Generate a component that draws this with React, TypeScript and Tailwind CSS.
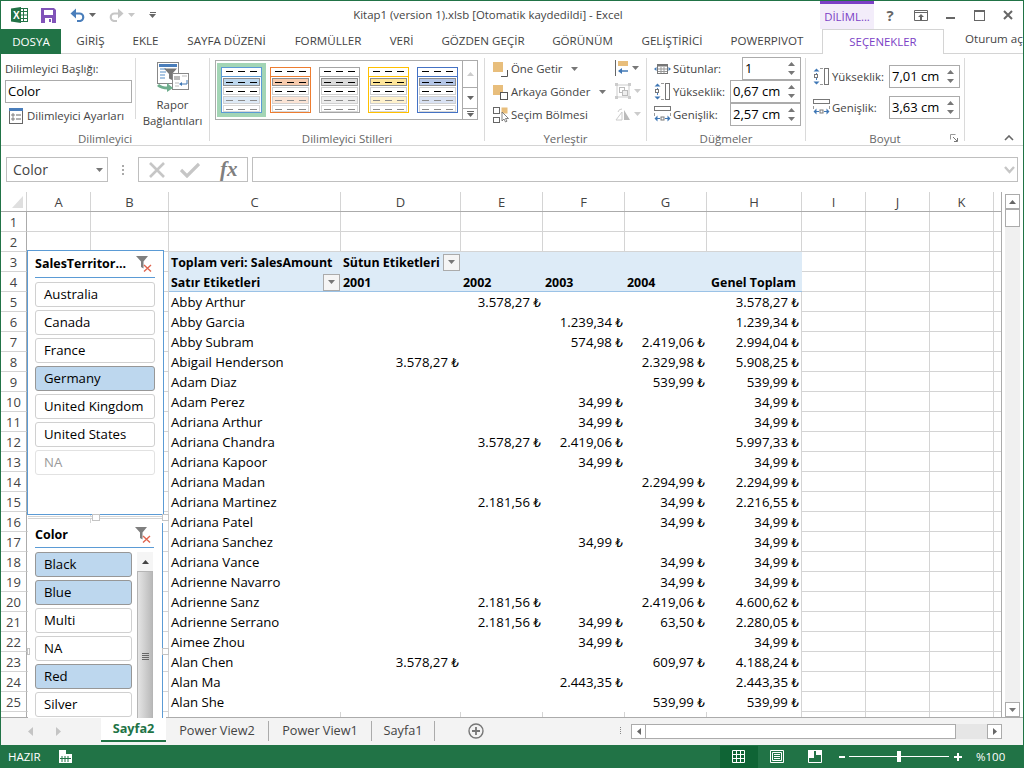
import React from "react"

const columnWidths = ["w-[64px]", "w-[78px]", "w-[172px]", "w-[120px]", "w-[82px]", "w-[82px]", "w-[82px]", "w-[95px]", "w-[64px]", "w-[64px]", "w-[64px]", "w-[8px]"]
const columnNames = ["A", "B", "C", "D", "E", "F", "G", "H", "I", "J", "K", ""]

// name, 2001, 2002, 2003, 2004, total
const pivotRows: string[][] = [
  ["Abby Arthur", "", "3.578,27", "", "", "3.578,27"],
  ["Abby Garcia", "", "", "1.239,34", "", "1.239,34"],
  ["Abby Subram", "", "", "574,98", "2.419,06", "2.994,04"],
  ["Abigail Henderson", "3.578,27", "", "", "2.329,98", "5.908,25"],
  ["Adam Diaz", "", "", "", "539,99", "539,99"],
  ["Adam Perez", "", "", "34,99", "", "34,99"],
  ["Adriana Arthur", "", "", "34,99", "", "34,99"],
  ["Adriana Chandra", "", "3.578,27", "2.419,06", "", "5.997,33"],
  ["Adriana Kapoor", "", "", "34,99", "", "34,99"],
  ["Adriana Madan", "", "", "", "2.294,99", "2.294,99"],
  ["Adriana Martinez", "", "2.181,56", "", "34,99", "2.216,55"],
  ["Adriana Patel", "", "", "", "34,99", "34,99"],
  ["Adriana Sanchez", "", "", "34,99", "", "34,99"],
  ["Adriana Vance", "", "", "", "34,99", "34,99"],
  ["Adrienne Navarro", "", "", "", "34,99", "34,99"],
  ["Adrienne Sanz", "", "2.181,56", "", "2.419,06", "4.600,62"],
  ["Adrienne Serrano", "", "2.181,56", "34,99", "63,50", "2.280,05"],
  ["Aimee Zhou", "", "", "34,99", "", "34,99"],
  ["Alan Chen", "3.578,27", "", "", "609,97", "4.188,24"],
  ["Alan Ma", "", "", "2.443,35", "", "2.443,35"],
  ["Alan She", "", "", "", "539,99", "539,99"],
]

const tabs = [
  { label: "GİRİŞ", w: "w-[59px]" },
  { label: "EKLE", w: "w-[51px]" },
  { label: "SAYFA DÜZENİ", w: "w-[111px]" },
  { label: "FORMÜLLER", w: "w-[92px]" },
  { label: "VERİ", w: "w-[55px]" },
  { label: "GÖZDEN GEÇİR", w: "w-[108px]" },
  { label: "GÖRÜNÜM", w: "w-[91px]" },
  { label: "GELİŞTİRİCİ", w: "w-[88px]" },
  { label: "POWERPIVOT", w: "w-[102px]" },
]

const swatches = [
  { border: "#5B9BD5", a: "#BDD7EE", b: "#DEEAF6", selected: true },
  { border: "#ED7D31", a: "#F8CBAD", b: "#FBE4D5", selected: false },
  { border: "#A5A5A5", a: "#DBDBDB", b: "#EDEDED", selected: false },
  { border: "#FFC000", a: "#FFE699", b: "#FFF2CC", selected: false },
  { border: "#4472C4", a: "#B4C6E7", b: "#D9E2F3", selected: false },
]

function Caret({ className = "" }: { className?: string }) {
  return (
    <svg width="7" height="4" viewBox="0 0 7 4" className={className}>
      <path d="M0 0h7L3.5 4z" fill="currentColor" />
    </svg>
  )
}

function ExcelLogo() {
  return (
    <svg width="17" height="16" viewBox="0 0 17 16">
      <rect x="6.5" y="1.5" width="10" height="13" fill="#fff" stroke="#217346" />
      <path d="M10 4.5h6M10 8h6M10 11.5h6M12.5 2v12" stroke="#217346" />
      <path d="M0 1.5L10 0v16L0 14.5z" fill="#217346" />
      <text x="2" y="12" fontSize="10" fontWeight="700" fill="#fff" fontFamily="Liberation Sans">X</text>
    </svg>
  )
}

function SaveIcon() {
  return (
    <svg width="15" height="15" viewBox="0 0 15 15">
      <path d="M0 0h13l2 2v13H0z" fill="#8053B8" />
      <rect x="3" y="2" width="9" height="5" fill="#fff" />
      <rect x="4" y="10" width="7" height="5" fill="#fff" />
      <rect x="8" y="11" width="2" height="3" fill="#8053B8" />
    </svg>
  )
}

function UndoArrow({ color, flip }: { color: string; flip?: boolean }) {
  return (
    <svg width="15" height="14" viewBox="0 0 15 14" className={flip ? "-scale-x-100" : ""}>
      <path d="M2 5.5h7.5a3.6 3.6 0 0 1 0 7.5H7" fill="none" stroke={color} strokeWidth="2.2" />
      <path d="M6 0.5L0.5 5.5 6 10.5z" fill={color} />
    </svg>
  )
}

function FilterClear() {
  return (
    <svg width="17" height="16" viewBox="0 0 17 16">
      <path d="M0 0h12L7.5 5.5v7L5 11V5.5z" fill="#7f7f7f" />
      <path d="M8 9l7 6.5M15 9l-7 6.5" stroke="#E0654F" strokeWidth="1.4" />
    </svg>
  )
}

function DropButton({ className = "" }: { className?: string }) {
  return (
    <span className={`flex h-[17px] w-[17px] items-center justify-center border border-[#ababab] bg-[#f5f5f5] text-[#777] ${className}`}>
      <Caret />
    </span>
  )
}

function StyleSwatch({ border, a, b, selected }: { border: string; a: string; b: string; selected: boolean }) {
  const dash = (y: number, color: string) => (
    <path d={`M5 ${y}h7M17 ${y}h7M29 ${y}h7`} stroke={color} />
  )
  return (
    <div className={`flex h-[54px] w-[49px] items-center justify-center ${selected ? "bg-[#A3D5B5]" : ""}`}>
      <svg width="41" height="46" viewBox="0 0 41 46">
        <rect x="0.5" y="0.5" width="40" height="45" fill="#fff" stroke={border} />
        <path d="M0 9.5h41" stroke={border} />
        {dash(4.5, "#000")}
        <rect x="2.5" y="11.5" width="36" height="7" fill={a} stroke="#8f8f8f" />
        {dash(15.5, "#000")}
        <rect x="2.5" y="20.5" width="36" height="7" fill="#fff" stroke="#d0d0d0" />
        {dash(24.5, "#000")}
        <rect x="2.5" y="29.5" width="36" height="7" fill={b} stroke="#d0d0d0" />
        {dash(33.5, "#8a8a8a")}
        <rect x="2.5" y="38.5" width="36" height="6" fill="#fff" stroke="#d8d8d8" />
        {dash(42.5, "#8a8a8a")}
      </svg>
    </div>
  )
}

function RibbonGroup({ label, width, children, launcher }: { label: string; width: string; children: React.ReactNode; launcher?: boolean }) {
  return (
    <div className={`relative my-[4px] flex shrink-0 flex-col border-r border-[#dadada] ${width}`}>
      <div className="flex min-h-0 flex-1">{children}</div>
      <div className="h-[9px] text-center text-[11.5px] leading-[14px] text-[#666]">{label}</div>
      {launcher && (
        <svg width="8" height="8" viewBox="0 0 8 8" className="absolute bottom-[-1px] right-[6px]">
          <path d="M0.5 0.5h5M0.5 0.5v5" stroke="#999" fill="none" />
          <path d="M3 3l4 4M7.5 4v3.5H4" stroke="#777" fill="none" />
        </svg>
      )}
    </div>
  )
}

function SpinInput({ value, width }: { value: string; width: string }) {
  return (
    <div className={`flex h-[23px] items-center justify-between border border-[#ababab] bg-white pl-[2px] pr-[2px] text-[13px] text-black ${width}`}>
      <span>{value}</span>
      <span className="flex w-[13px] flex-col items-center gap-[5px] text-[#777]">
        <Caret className="rotate-180" />
        <Caret />
      </span>
    </div>
  )
}

function HeightIcon() {
  return (
    <svg width="17" height="17" viewBox="0 0 17 17">
      <path d="M3.5 5v7" stroke="#4a7ebb" />
      <path d="M0.5 3.5l3-3 3 3zM0.5 13.5l3 3 3-3z" fill="#3f77b5" />
      <rect x="1.5" y="6.5" width="3" height="3" fill="#fff" stroke="#777" />
      <rect x="11.5" y="0.5" width="4" height="16" fill="#fff" stroke="#777" />
      <path d="M7 0.5h3M7 16.5h3" stroke="#999" />
    </svg>
  )
}

function WidthIcon() {
  return (
    <svg width="17" height="17" viewBox="0 0 17 17">
      <rect x="0.5" y="0.5" width="16" height="4" fill="#fff" stroke="#777" />
      <path d="M0.5 7v3M16.5 7v3" stroke="#999" />
      <rect x="7" y="11" width="3" height="3" fill="#fff" stroke="#777" />
      <path d="M3.5 9.5l-3 3 3 3zM13.5 9.5l3 3-3 3z" fill="#3f77b5" />
      <path d="M3 12.5h3M11 12.5h3" stroke="#3f77b5" />
    </svg>
  )
}

function ColumnsIcon() {
  return (
    <svg width="17" height="12" viewBox="0 0 17 12">
      <path d="M0 6l2.5-2v4zM17 6l-2.5-2v4z" fill="#3f77b5" />
      <rect x="3.5" y="1.5" width="10" height="9" fill="#fff" stroke="#777" />
      <path d="M3.5 1.5h10v2h-10z" fill="#777" />
      <path d="M4 6h9M4 8.5h9M7 4v6M10 4v6" stroke="#999" />
    </svg>
  )
}

function ArrangeIcon({ kind }: { kind: "front" | "back" | "pane" }) {
  if (kind === "pane") {
    return (
      <svg width="16" height="16" viewBox="0 0 16 16">
        <rect x="0.5" y="0.5" width="6" height="6" fill="#fff" stroke="#666" />
        <rect x="0.5" y="10.5" width="6" height="5" fill="#fff" stroke="#666" />
        <rect x="8.5" y="0.5" width="6" height="6" fill="#E8BE7C" />
        <path d="M9 5l0 9 2-2 1.5 3 1.5-.8-1.5-2.7h3z" fill="#fff" stroke="#666" strokeWidth="0.8" />
      </svg>
    )
  }
  return (
    <svg width="15" height="15" viewBox="0 0 15 15">
      {kind === "front" && <path d="M8 14.5h6.5V8" fill="none" stroke="#555" />}
      <rect x="0" y="0" width="10" height="10" fill="#E8BE7C" />
      {kind === "back" && <rect x="7.5" y="7.5" width="7" height="7" fill="#fff" stroke="#555" />}
    </svg>
  )
}

function AlignIcon() {
  return (
    <svg width="14" height="16" viewBox="0 0 14 16">
      <path d="M0.5 0v16" stroke="#666" />
      <rect x="3" y="1" width="10" height="5" fill="#E8BE7C" />
      <path d="M4 11h9" stroke="#3f77b5" strokeWidth="1.5" />
      <path d="M7 8l-4 3 4 3z" fill="#3f77b5" />
    </svg>
  )
}

function GroupIcon() {
  return (
    <svg width="16" height="16" viewBox="0 0 16 16">
      <path d="M2 2h12v12H2z" fill="none" stroke="#ccc" />
      <path d="M0 0h3v3H0zM13 0h3v3h-3zM0 13h3v3H0zM13 13h3v3h-3z" fill="#ccc" />
      <rect x="4.5" y="4.5" width="5" height="5" fill="#fff" stroke="#bbb" />
      <rect x="7.5" y="7.5" width="5" height="5" fill="#eee" stroke="#bbb" />
    </svg>
  )
}

function RotateIcon() {
  return (
    <svg width="16" height="14" viewBox="0 0 16 14">
      <path d="M1 13L7 5v8z" fill="#fff" stroke="#ccc" />
      <path d="M9 3l6 10H9z" fill="#bbb" />
      <path d="M3 5a4 4 0 0 1 4-3" fill="none" stroke="#ccc" />
    </svg>
  )
}

function ReportIcon() {
  return (
    <svg width="32" height="30" viewBox="0 0 32 30">
      <rect x="0.5" y="0.5" width="21" height="21" fill="#fff" stroke="#888" />
      <rect x="2" y="2" width="18" height="3" fill="#4a7ebb" />
      <path d="M3 7h6M3 10h6M3 13h5M3 16h5" stroke="#8fb4d9" strokeWidth="1.4" />
      <path d="M7 6.5h13l-5 5.5v6l-3-1.5V12z" fill="#777" />
      <rect x="15.5" y="11.5" width="16" height="16" fill="#fff" stroke="#888" />
      <path d="M17 14h6v4h-6z" fill="#bbb" />
      <path d="M25 14h5" stroke="#bbb" />
      <path d="M18 21h4M18 24h4" stroke="#bbb" />
      <path d="M30 18v4h-5" stroke="#3f77b5" fill="none" />
      <path d="M25 20l-3 2 3 2z" fill="#3f77b5" />
      <path d="M1 23c3 3 7 3 10 3" fill="none" stroke="#6FAE8D" strokeWidth="3" />
      <path d="M10 21l6 5-6 4z" fill="#6FAE8D" />
    </svg>
  )
}

function SettingsIcon() {
  return (
    <svg width="14" height="16" viewBox="0 0 14 16">
      <rect x="0.5" y="0.5" width="13" height="15" fill="#fff" stroke="#666" />
      <rect x="0" y="0" width="14" height="3" fill="#4a7ebb" />
      <path d="M3 6h2v2H3zM3 10h2v2H3z" fill="none" stroke="#666" strokeWidth="0.8" />
      <path d="M7 7h5M7 11h5" stroke="#666" />
    </svg>
  )
}

function Ribbon() {
  return (
    <div className="flex h-[92px] shrink-0 border-b border-[#d4d4d4] bg-white text-[11.4px] text-[#444]">
      <RibbonGroup label="Dilimleyici" width="w-[209px]">
        <div className="mb-[13px] flex w-[135px] shrink-0 flex-col border-r border-[#dadada] pl-[4px]">
          <div className="mt-[2px] h-[20px] shrink-0 leading-[18px]">Dilimleyici Başlığı:</div>
          <div className="flex h-[23px] w-[127px] shrink-0 items-center border border-[#ababab] px-[2px] text-[13px] text-black">Color</div>
          <div className="mt-[4px] flex shrink-0 items-center gap-[4px] pl-[4px]">
            <SettingsIcon />
            <span>Dilimleyici Ayarları</span>
          </div>
        </div>
        <div className="flex flex-1 flex-col items-center pt-[4px] leading-[16px]">
          <ReportIcon />
          <div className="mt-[5px]">Rapor</div>
          <div>Bağlantıları</div>
        </div>
      </RibbonGroup>

      <RibbonGroup label="Dilimleyici Stilleri" width="w-[275px]">
        <div className="ml-[5px] mt-[2px] flex h-[60px] w-[263px] border border-[#ababab] pl-[1px] pt-[2px]">
          <div className="flex flex-1">
            {swatches.map((s) => (
              <StyleSwatch key={s.border} {...s} />
            ))}
          </div>
          <div className="-mt-[2px] flex w-[15px] flex-col border-l border-[#ababab] text-[#999]">
            <div className="flex h-[27px] items-center justify-center border-b border-[#ababab] text-[#ccc]"><Caret className="rotate-180" /></div>
            <div className="flex h-[21px] items-center justify-center border-b border-[#ababab] text-[#666]"><Caret /></div>
            <div className="flex flex-1 flex-col items-center justify-center gap-[1px] text-[#666]">
              <span className="h-px w-[7px] bg-[#666]" />
              <Caret />
            </div>
          </div>
        </div>
      </RibbonGroup>

      <RibbonGroup label="Yerleştir" width="w-[162px]">
        <div className="flex w-[130px] shrink-0 flex-col gap-[7px] whitespace-nowrap pl-[8px] pt-[3px]">
          <div className="flex h-[16px] items-center gap-[3px]"><ArrangeIcon kind="front" /><span>Öne Getir</span><Caret className="ml-[6px] text-[#777]" /></div>
          <div className="flex h-[16px] items-center gap-[3px]"><ArrangeIcon kind="back" /><span>Arkaya Gönder</span><Caret className="ml-[6px] text-[#777]" /></div>
          <div className="flex h-[16px] items-center gap-[2px]"><ArrangeIcon kind="pane" /><span>Seçim Bölmesi</span></div>
        </div>
        <div className="flex flex-col gap-[7px] pt-[2px]">
          <div className="flex h-[16px] items-center gap-[3px] text-[#777]"><AlignIcon /><Caret /></div>
          <div className="flex h-[16px] items-center gap-[3px] text-[#ccc]"><GroupIcon /><Caret /></div>
          <div className="flex h-[16px] items-center gap-[3px] text-[#ccc]"><RotateIcon /><Caret /></div>
        </div>
      </RibbonGroup>

      <RibbonGroup label="Düğmeler" width="w-[159px]">
        <div className="-mt-[1px] flex flex-1 flex-col pl-[7px]">
          <div className="flex h-[23px] items-center"><span className="flex w-[19px]"><ColumnsIcon /></span><span className="w-[70px]">Sütunlar:</span><SpinInput value="1" width="ml-[-1px] w-[59px]" /></div>
          <div className="flex h-[23px] items-center"><span className="flex w-[19px]"><HeightIcon /></span><span className="w-[57px]">Yükseklik:</span><SpinInput value="0,67 cm" width="w-[71px]" /></div>
          <div className="flex h-[23px] items-center"><span className="flex w-[19px]"><WidthIcon /></span><span className="w-[57px]">Genişlik:</span><SpinInput value="2,57 cm" width="w-[71px]" /></div>
        </div>
      </RibbonGroup>

      <RibbonGroup label="Boyut" width="w-[159px]" launcher>
        <div className="flex flex-1 flex-col gap-[8px] pl-[7px] pt-[7px]">
          <div className="flex h-[23px] items-center"><span className="flex w-[19px]"><HeightIcon /></span><span className="w-[57px]">Yükseklik:</span><SpinInput value="7,01 cm" width="w-[71px]" /></div>
          <div className="flex h-[23px] items-center"><span className="flex w-[19px]"><WidthIcon /></span><span className="w-[57px]">Genişlik:</span><SpinInput value="3,63 cm" width="w-[71px]" /></div>
        </div>
      </RibbonGroup>

      <div className="flex flex-1 items-end justify-end pb-[4px] pr-[9px]">
        <svg width="10" height="6" viewBox="0 0 10 6"><path d="M1 5l4-4 4 4" fill="none" stroke="#666" strokeWidth="1.6" /></svg>
      </div>
    </div>
  )
}

function FormulaBar() {
  return (
    <div className="flex h-[46px] shrink-0 items-center gap-[4px] bg-white pl-[5px] pr-[5px] pt-[1px]">
      <div className="flex h-[25px] w-[102px] items-center justify-between border border-[#bfbfbf] pl-[6px] pr-[4px] text-[14px] text-[#444]">
        Color
        <Caret className="text-[#777]" />
      </div>
      <div className="flex w-[22px] flex-col items-center gap-[2px]">
        <span className="h-[2px] w-[2px] bg-[#aaa]" />
        <span className="h-[2px] w-[2px] bg-[#aaa]" />
        <span className="h-[2px] w-[2px] bg-[#aaa]" />
      </div>
      <div className="flex h-[25px] w-[110px] items-center gap-[14px] border border-[#bfbfbf] pl-[9px]">
        <svg width="18" height="16" viewBox="0 0 18 16"><path d="M2 1l14 14M16 1L2 15" stroke="#c6c6c6" strokeWidth="2.6" /></svg>
        <svg width="20" height="16" viewBox="0 0 20 16"><path d="M1 8l6 6L19 2" fill="none" stroke="#c6c6c6" strokeWidth="3.2" /></svg>
        <span className="ml-[6px] font-['Liberation_Serif'] text-[21px] font-bold italic leading-none text-[#7f7f7f]">fx</span>
      </div>
      <div className="flex h-[25px] flex-1 items-center justify-end border border-[#bfbfbf] pr-[2px]">
        <svg width="11" height="8" viewBox="0 0 11 8"><path d="M1 1l4.5 5L10 1" fill="none" stroke="#c6c6c6" strokeWidth="2.4" /></svg>
      </div>
    </div>
  )
}

function Money({ value }: { value: string }) {
  if (!value) return null
  return <span className="whitespace-pre">{value} <span className="text-[12px]">₺</span></span>
}

function Cell({ col, children, className = "" }: { col: number; children?: React.ReactNode; className?: string }) {
  return (
    <div className={`flex h-full shrink-0 items-center overflow-visible whitespace-nowrap pt-[2px] text-black ${columnWidths[col]} ${className}`}>
      {children}
    </div>
  )
}

const gridCell = "border-b border-r border-[#d4d4d4]"
const pivotHead = "bg-[#DDEBF7] text-[12.4px] font-bold"
const pivotHeadLine = "bg-[#DDEBF7] text-[12.4px] font-bold shadow-[inset_0_-1px_0_#9BC2E6]"

function SheetRow({ num, children }: { num: number | string; children: React.ReactNode }) {
  return (
    <div className="flex h-[20px]">
      <div className="flex h-full w-[26px] shrink-0 items-center justify-center border-b border-r border-b-[#d4d4d4] border-r-[#ababab] pt-[2px] text-[13px] text-[#444]">{num}</div>
      {children}
    </div>
  )
}

function TrailingCells() {
  return (
    <>
      {[8, 9, 10, 11].map((c) => (
        <Cell key={c} col={c} className={gridCell} />
      ))}
    </>
  )
}

function SheetGrid() {
  return (
    <div className="flex w-[1001px] shrink-0 flex-col overflow-hidden border-r border-[#ababab] text-[13.2px]">
      {/* Column headers */}
      <div className="flex h-[20px] shrink-0 border-b border-[#ababab]">
        <div className="flex w-[26px] shrink-0 items-end justify-end border-r border-[#d4d4d4] pb-[3px] pr-[3px]">
          <div className="h-0 w-0 border-b-[12px] border-l-[11px] border-b-[#dfdfdf] border-l-transparent" />
        </div>
        {columnNames.map((name, i) => (
          <div key={i} className={`flex shrink-0 items-center justify-center border-r border-[#d4d4d4] pt-[2px] text-[13px] text-[#444] ${columnWidths[i]}`}>
            {name}
          </div>
        ))}
      </div>

      {[1, 2].map((n) => (
        <SheetRow key={n} num={n}>
          {columnNames.map((_, c) => <Cell key={c} col={c} className={gridCell} />)}
        </SheetRow>
      ))}

      <SheetRow num={3}>
        <Cell col={0} className={gridCell} />
        <Cell col={1} className={gridCell} />
        <Cell col={2} className={`pl-[2px] ${pivotHead}`}>Toplam veri: SalesAmount</Cell>
        <Cell col={3} className={`justify-between pl-[2px] ${pivotHead}`}>Sütun Etiketleri<DropButton className="mb-[2px] mr-[1px]" /></Cell>
        {[4, 5, 6, 7].map((c) => <Cell key={c} col={c} className="bg-[#DDEBF7]" />)}
        <TrailingCells />
      </SheetRow>
      <SheetRow num={4}>
        <Cell col={0} className={gridCell} />
        <Cell col={1} className={gridCell} />
        <Cell col={2} className={`justify-between pl-[2px] ${pivotHeadLine}`}>Satır Etiketleri<DropButton className="mb-[2px] mr-[1px]" /></Cell>
        <Cell col={3} className={`pl-[2px] ${pivotHeadLine}`}>2001</Cell>
        <Cell col={4} className={`pl-[2px] ${pivotHeadLine}`}>2002</Cell>
        <Cell col={5} className={`pl-[2px] ${pivotHeadLine}`}>2003</Cell>
        <Cell col={6} className={`pl-[2px] ${pivotHeadLine}`}>2004</Cell>
        <Cell col={7} className={`justify-end pr-[6px] ${pivotHeadLine}`}>Genel Toplam</Cell>
        <TrailingCells />
      </SheetRow>

      {pivotRows.map((row, i) => (
        <SheetRow key={row[0]} num={i + 5}>
          <Cell col={0} className={gridCell} />
          <Cell col={1} className={gridCell} />
          <Cell col={2} className="pl-[2px]">{row[0]}</Cell>
          <Cell col={3} className="justify-end pr-[2px]"><Money value={row[1]} /></Cell>
          <Cell col={4} className="justify-end pr-[2px]"><Money value={row[2]} /></Cell>
          <Cell col={5} className="justify-end pr-[2px]"><Money value={row[3]} /></Cell>
          <Cell col={6} className="justify-end pr-[2px]"><Money value={row[4]} /></Cell>
          <Cell col={7} className="justify-end border-r border-[#d4d4d4] pr-[2px]"><Money value={row[5]} /></Cell>
          <TrailingCells />
        </SheetRow>
      ))}

      <div className="flex h-[6px]">
        <div className="w-[26px] shrink-0 border-r border-[#ababab]" />
        {columnNames.map((_, c) => <Cell key={c} col={c} className="border-r border-[#d4d4d4]" />)}
      </div>
    </div>
  )
}

function SlicerItem({ label, state }: { label: string; state: "on" | "off" | "empty" }) {
  const look =
    state === "on"
      ? "border-[#979797] bg-[#BDD7EE] text-black"
      : state === "off"
        ? "border-[#d0d0d0] bg-white text-black"
        : "border-[#e2e2e2] bg-white text-[#9a9a9a]"
  return (
    <div className={`flex h-[25px] shrink-0 items-center rounded-[3px] border pl-[8px] text-[13.2px] ${look}`}>{label}</div>
  )
}

function SlicerHeader({ title, height }: { title: string; height: string }) {
  return (
    <div className={`flex shrink-0 items-center justify-between border-b border-[#5B9BD5] pr-[2px] ${height}`}>
      <span className="text-[12.5px] font-bold text-black">{title}</span>
      <FilterClear />
    </div>
  )
}

function Handle({ className }: { className: string }) {
  return <span className={`absolute border border-[#c4c4c4] bg-white ${className}`} />
}

function Slicers() {
  return (
    <>
      <div className="absolute left-[26px] top-[58px] flex h-[265px] w-[137px] flex-col gap-[3px] border border-[#5B9BD5] bg-white pl-[7px] pr-[8px]">
        <SlicerHeader title="SalesTerritor..." height="h-[27px]" />
        <div className="mt-[1px] flex flex-col gap-[3px]">
          <SlicerItem label="Australia" state="off" />
          <SlicerItem label="Canada" state="off" />
          <SlicerItem label="France" state="off" />
          <SlicerItem label="Germany" state="on" />
          <SlicerItem label="United Kingdom" state="off" />
          <SlicerItem label="United States" state="off" />
          <SlicerItem label="NA" state="empty" />
        </div>
      </div>

      <div className="absolute left-[27px] top-[331px] flex h-[195px] w-[135px] flex-col gap-[4px] overflow-hidden border-r border-[#5B9BD5] bg-white pl-[7px] pr-[8px]">
        <SlicerHeader title="Color" height="h-[25px]" />
        <div className="flex gap-[5px]">
          <div className="flex w-[97px] shrink-0 flex-col gap-[3px]">
            <SlicerItem label="Black" state="on" />
            <SlicerItem label="Blue" state="on" />
            <SlicerItem label="Multi" state="off" />
            <SlicerItem label="NA" state="off" />
            <SlicerItem label="Red" state="on" />
            <SlicerItem label="Silver" state="off" />
          </div>
          <div className="flex w-[16px] shrink-0 flex-col bg-[#f0f0f0]">
            <div className="flex h-[19px] items-center justify-center bg-[#f5f5f5] text-[#444]"><Caret className="rotate-180" /></div>
            <div className="flex h-[170px] flex-col items-center justify-center gap-[1px] border border-[#b5b5b5] bg-gradient-to-r from-[#e4e4e4] via-[#cfcfcf] to-[#b9b9b9]">
              <span className="h-px w-[7px] bg-[#666]" />
              <span className="h-px w-[7px] bg-[#666]" />
              <span className="h-px w-[7px] bg-[#666]" />
              <span className="h-px w-[7px] bg-[#666]" />
            </div>
          </div>
        </div>
      </div>

      {/* selection frame handles */}
      <div className="absolute left-[27px] top-[324px] h-[3px] w-[138px] border-y border-[#d4d4d4] bg-white" />
      <Handle className="left-[91px] top-[322px] h-[7px] w-[8px]" />
      <Handle className="left-[161px] top-[322px] h-[7px] w-[7px]" />
      <Handle className="left-[26px] top-[456px] h-[7px] w-[3px]" />
      <Handle className="left-[161px] top-[456px] h-[7px] w-[7px]" />
    </>
  )
}

function VerticalScrollbar() {
  return (
    <div className="flex flex-1 justify-center bg-white pt-[2px]">
      <div className="flex w-[15px] flex-col bg-[#f0f0f0]">
        <div className="flex h-[15px] items-center justify-center border border-[#ababab] bg-white text-[#666]"><Caret className="rotate-180" /></div>
        <div className="h-[18px] border border-[#ababab] bg-white" />
        <div className="flex-1" />
        <div className="flex h-[15px] items-center justify-center border border-[#ababab] bg-white text-[#777]"><Caret /></div>
      </div>
    </div>
  )
}

function SheetTabs() {
  return (
    <div className="flex h-[28px] shrink-0 items-start border-t border-[#ababab] bg-[#f3f3f3] text-[12.7px] text-[#444]">
      <div className="flex h-full w-[100px] items-center gap-[23px] pl-[27px] text-[#c4c4c4]">
        <svg width="5" height="9" viewBox="0 0 5 9"><path d="M5 0v9L0 4.5z" fill="currentColor" /></svg>
        <svg width="5" height="9" viewBox="0 0 5 9"><path d="M0 0v9l5-4.5z" fill="currentColor" /></svg>
      </div>
      <div className="-mt-px flex h-[25px] w-[65px] items-center justify-center border-b-2 border-[#217346] bg-white pt-[1px] font-bold text-[#217346]">Sayfa2</div>
      <div className="mt-[5px] flex h-[16px] items-center">
        <span className="flex w-[103px] justify-center border-r border-[#ababab]">Power View2</span>
        <span className="flex w-[103px] justify-center border-r border-[#ababab]">Power View1</span>
        <span className="flex w-[63px] justify-center border-r border-[#ababab]">Sayfa1</span>
      </div>
      <div className="ml-[33px] mt-[5px] flex h-[16px] w-[16px] items-center justify-center">
        <svg width="16" height="16" viewBox="0 0 16 16">
          <circle cx="8" cy="8" r="7" fill="none" stroke="#777" strokeWidth="1.4" />
          <path d="M8 4v8M4 8h8" stroke="#777" strokeWidth="1.8" />
        </svg>
      </div>
      <div className="ml-[136px] mt-[9px] flex w-[3px] flex-col gap-[1px]">
        <span className="h-px w-px bg-[#888]" />
        <span className="h-px w-px bg-[#888]" />
        <span className="h-px w-px bg-[#888]" />
        <span className="h-px w-px bg-[#888]" />
      </div>
      <div className="ml-[8px] mt-[6px] flex h-[15px] w-[371px] bg-[#e6e6e6]">
        <div className="flex w-[15px] items-center justify-center border border-[#ababab] bg-white text-[#666]">
          <svg width="4" height="7" viewBox="0 0 4 7"><path d="M4 0v7L0 3.5z" fill="currentColor" /></svg>
        </div>
        <div className="w-[310px] border-y border-r border-[#ababab] bg-white" />
        <div className="flex-1" />
        <div className="flex w-[15px] items-center justify-center border border-[#ababab] bg-white text-[#666]">
          <svg width="4" height="7" viewBox="0 0 4 7"><path d="M0 0v7l4-3.5z" fill="currentColor" /></svg>
        </div>
      </div>
    </div>
  )
}

function StatusBar() {
  return (
    <div className="flex h-[23px] shrink-0 items-center bg-[#217346] text-[11.5px] text-white">
      <span className="ml-[8px] w-[51px]">HAZIR</span>
      <svg width="13" height="13" viewBox="0 0 13 13">
        <path d="M0 0h7v4h6v9H0z" fill="#fff" />
        <path d="M3 6v6M6 6v6M9 6v6M1 8.5h11" stroke="#217346" />
      </svg>
      <div className="ml-[648px] flex h-[22px] w-[38px] items-center justify-center bg-[#0F6435]">
        <svg width="14" height="13" viewBox="0 0 14 13"><path d="M.5.5h12v12H.5zM.5 4.5h12M.5 8.5h12M4.5.5v12M8.5.5v12" fill="none" stroke="#fff" /></svg>
      </div>
      <div className="flex w-[38px] justify-center">
        <svg width="14" height="13" viewBox="0 0 14 13"><path d="M.5.5h13v12H.5z" fill="none" stroke="#fff" /><path d="M2.5 2.5h9v8h-9zM4 4.5h6M4 6.5h6M4 8.5h6" fill="none" stroke="#fff" /></svg>
      </div>
      <div className="flex w-[38px] justify-center">
        <svg width="14" height="13" viewBox="0 0 14 13"><path d="M.5.5h13v12H.5z" fill="none" stroke="#fff" /><path d="M0 0h6v8H0zM8 0h6v5H8z" fill="#fff" /></svg>
      </div>
      <span className="ml-[5px] h-[2px] w-[6px] bg-white" />
      <div className="relative ml-[4px] h-px w-[100px] bg-white">
        <span className="absolute left-[48px] top-[-5px] h-[11px] w-[4px] bg-white" />
      </div>
      <svg width="8" height="8" viewBox="0 0 8 8" className="ml-[5px]"><path d="M4 0v8M0 4h8" stroke="#fff" strokeWidth="2" /></svg>
      <span className="ml-[14px]">%100</span>
    </div>
  )
}

export default function App() {
  return (
    <div className="flex h-[768px] w-[1024px] flex-col overflow-hidden border-t border-[#217346] bg-white font-['Open_Sans','DejaVu_Sans',sans-serif]">
      <div className="flex min-h-0 flex-1 flex-col border-x border-[#217346]">
        {/* Title bar */}
        <div className="flex h-[28px] shrink-0 items-center text-[#444]">
          <div className="flex w-[342px] items-center pl-[10px]">
            <ExcelLogo />
            <span className="ml-[13px]"><SaveIcon /></span>
            <span className="ml-[14px]"><UndoArrow color="#4a7ebb" /></span>
            <Caret className="ml-[4px] text-[#666]" />
            <span className="ml-[13px]"><UndoArrow color="#c6c6c6" flip /></span>
            <Caret className="ml-[4px] text-[#c6c6c6]" />
            <span className="ml-[14px] flex flex-col items-center gap-[1px] text-[#666]"><span className="h-px w-[6px] bg-[#666]" /><Caret /></span>
          </div>
          <div className="w-[290px] whitespace-nowrap text-center text-[11.4px]">Kitap1 (version 1).xlsb [Otomatik kaydedildi] - Excel</div>
          <div className="ml-[187px] flex h-[28px] w-[54px] flex-col bg-[#F3EDFA]">
            <span className="h-[3px] bg-[#7B3FC6]" />
            <span className="flex flex-1 items-center justify-center text-[11.4px] text-[#7B3FC6]">DİLİML...</span>
          </div>
          <span className="ml-[8px] w-[16px] text-center text-[15px] font-bold text-[#666]">?</span>
          <svg width="14" height="11" viewBox="0 0 14 11" className="ml-[16px]">
            <path d="M.5.5h13v10H.5zM.5 2.5h13" fill="none" stroke="#666" />
            <path d="M7 4l-3 3h2v3h2V7h2z" fill="#666" />
          </svg>
          <span className="ml-[18px] mt-[6px] h-[2px] w-[9px] bg-[#666]" />
          <span className="ml-[19px] h-[11px] w-[11px] border border-t-2 border-[#666]" />
          <svg width="10" height="10" viewBox="0 0 10 10" className="ml-[18px]"><path d="M1 1l8 8M9 1L1 9" stroke="#666" strokeWidth="2" /></svg>
        </div>

        {/* Tabs */}
        <div className="flex h-[25px] shrink-0 text-[11.6px] text-[#444]">
          <div className="flex w-[60px] shrink-0 items-center justify-center bg-[#217346] text-white">DOSYA</div>
          <div className="flex flex-1 border-b border-[#d4d4d4]">
            {tabs.map((t) => (
              <div key={t.label} className={`flex shrink-0 items-center justify-center whitespace-nowrap ${t.w}`}>{t.label}</div>
            ))}
            <div className="w-[4px] shrink-0" />
            <div className="-mb-px flex w-[122px] shrink-0 items-center justify-center border-x border-t border-[#d4d4d4] border-b-white bg-white text-[11.4px] text-[#7B3FC6]">SEÇENEKLER</div>
            <div className="-mt-[4px] ml-[21px] flex items-center whitespace-nowrap">Oturum aç</div>
          </div>
        </div>

        <Ribbon />
        <FormulaBar />

        {/* Sheet */}
        <div className="relative flex min-h-0 flex-1">
          <SheetGrid />
          <VerticalScrollbar />
          <Slicers />
        </div>
        <SheetTabs />
      </div>
      <StatusBar />
    </div>
  )
}
